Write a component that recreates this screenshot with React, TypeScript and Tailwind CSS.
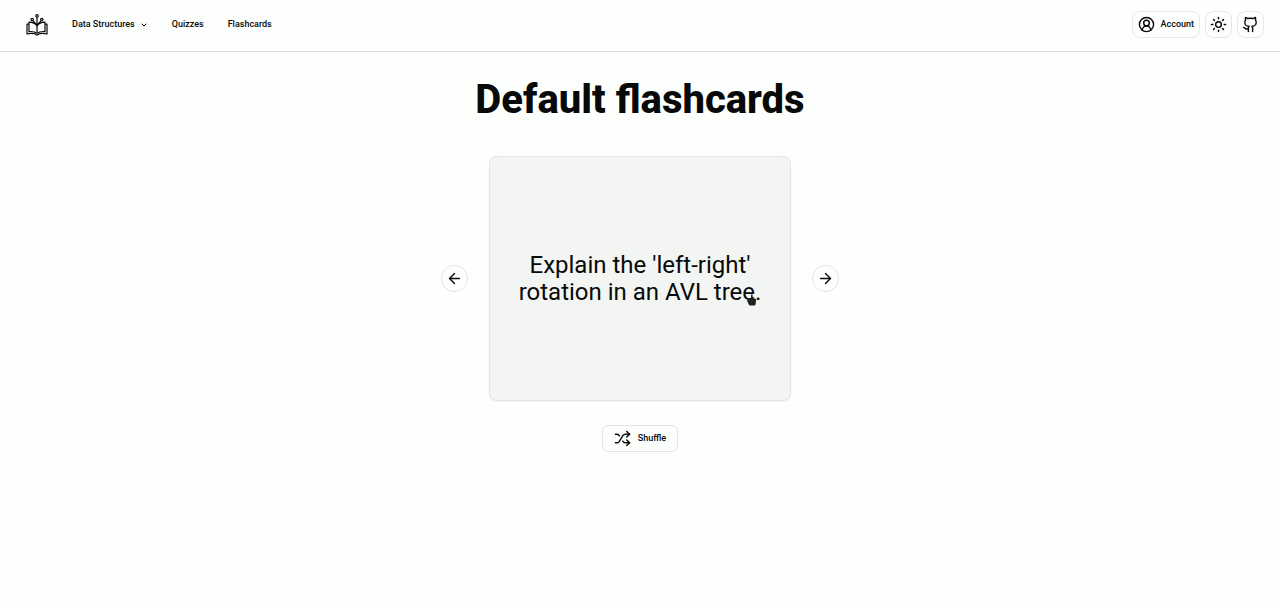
import { ArrowLeft, ArrowRight, ChevronDown, CircleUserRound, Github, Shuffle, Sun } from "lucide-react";

function Logo() {
  return (
    <svg viewBox="1 1 22 22" className="size-[22px]" fill="none" stroke="currentColor" strokeWidth="1.2" strokeLinejoin="round" aria-hidden="true">
      <path d="M12 4V19.500M12 12.200L8 8M12 12.200L16 8" />
      <circle cx="12" cy="2.900" r="1.200" />
      <circle cx="7.200" cy="6.600" r="1.200" />
      <circle cx="16.800" cy="6.600" r="1.200" />
      <path d="M12 13C10.400 10.400 7.600 9.200 4 9.200v9.400c3.600-.2 6.400.2 8 1.600 1.600-1.400 4.400-1.800 8-1.600V9.200c-3.600 0-6.400 1.200-8 3.800" />
      <path d="M4 11.200H2v9.600c3-.4 5.400-.4 7.600-.1.900.1 1.200 1.300 2.400 1.300s1.500-1.200 2.400-1.300c2.200-.3 4.600-.3 7.600.1v-9.600h-2" />
    </svg>
  );
}

function HandPointer() {
  return (
    <svg viewBox="0 0 10 12" className="pointer-events-none absolute right-[34px] bottom-[95px] h-3 w-[10px]" fill="#202221" aria-hidden="true">
      <path d="M4 1.200c0-1.200 1.600-1.200 1.600 0V4l2.200.5c1 .1 1.400.8 1.300 1.700L8.600 10c-.2 1.100-.8 1.600-1.800 1.600H3.600c-.8 0-1.300-.3-1.700-.9L.4 7.600C-.2 6.200.4 5 1.600 5L4 4.600Z" />
    </svg>
  );
}

const headerButton =
  "flex h-[27px] items-center justify-center rounded-lg border border-[#e6e8e6] text-[9px] font-medium";
const arrowButton =
  "flex size-[27px] shrink-0 items-center justify-center rounded-full border border-[#e3e5e3]";

export default function App() {
  return (
    <div className="min-h-screen bg-[#fdfffd] font-['Roboto',sans-serif] text-[#080a09]">
      <header className="flex items-center justify-between border-b border-[#dadcda] px-4 pt-[11px] pb-[13px]">
        <nav className="flex items-center gap-6 pl-[10px] text-[9px] font-medium" aria-label="Main">
          <a href="#home" aria-label="Home">
            <Logo />
          </a>
          <button type="button" className="flex items-center gap-[5px]">
            Data Structures
            <ChevronDown className="size-2" strokeWidth={3} />
          </button>
          <a href="#quizzes">Quizzes</a>
          <a href="#flashcards">Flashcards</a>
        </nav>
        <div className="flex gap-[5px]">
          <button type="button" className={`${headerButton} gap-[6px] px-[5px]`}>
            <CircleUserRound className="size-[17px]" />
            Account
          </button>
          <button type="button" className={`${headerButton} w-[27px]`} aria-label="Toggle theme">
            <Sun className="size-[17px]" />
          </button>
          <a href="#github" className={`${headerButton} w-[27px]`} aria-label="GitHub">
            <Github className="size-[17px]" />
          </a>
        </div>
      </header>

      <main className="flex flex-col items-center pt-6">
        <h1 className="text-[40px] leading-12 font-extrabold">Default flashcards</h1>
        <div className="mt-8 flex items-center gap-[21px]">
          <button type="button" className={arrowButton} aria-label="Previous card">
            <ArrowLeft className="size-[17px]" />
          </button>
          <div className="relative">
            <button
              type="button"
              className="flex min-h-[245px] w-[302px] items-center justify-center rounded-lg border border-[#e3e5e3] bg-[#f3f5f3] px-6 text-2xl leading-[27px] shadow-xs"
            >
              Explain the 'left-right' rotation in an AVL tree.
            </button>
            <HandPointer />
          </div>
          <button type="button" className={arrowButton} aria-label="Next card">
            <ArrowRight className="size-[17px]" />
          </button>
        </div>
        <button
          type="button"
          className="mt-6 flex h-[27px] items-center gap-[7px] rounded-md border border-[#e3e5e3] px-[11px] text-[9px] font-medium"
        >
          <Shuffle className="size-[17px]" />
          Shuffle
        </button>
      </main>
    </div>
  );
}
